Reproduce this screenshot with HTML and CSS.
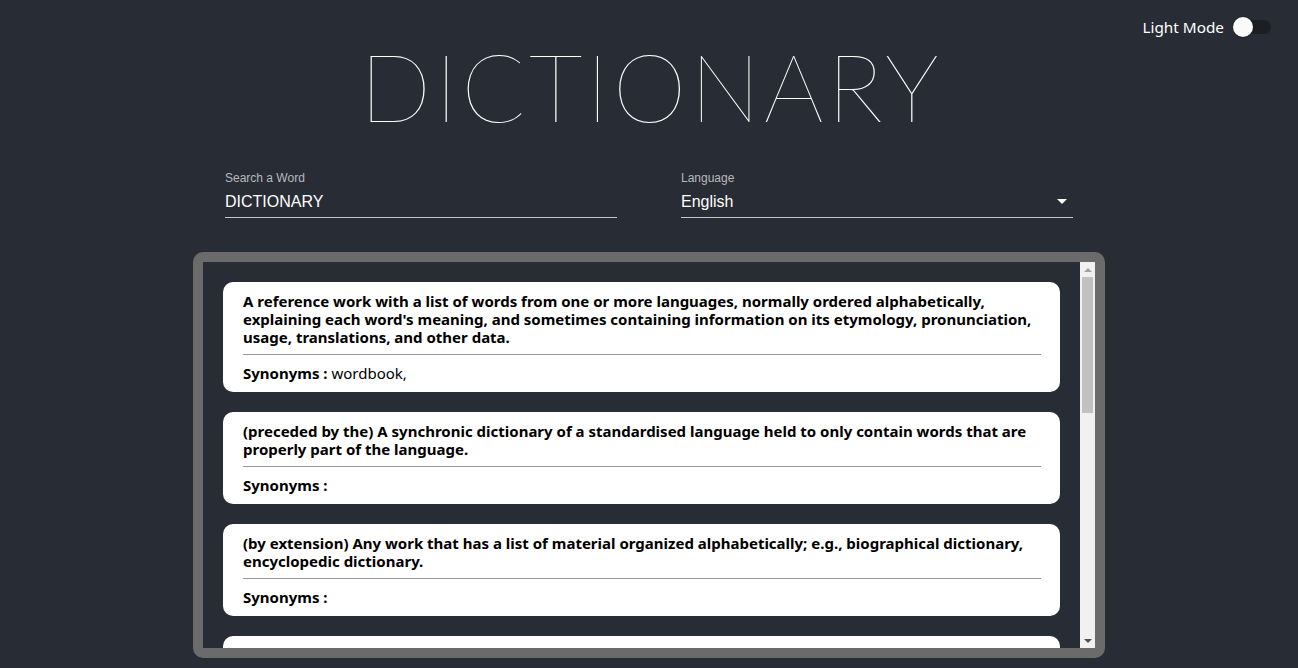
FILE: index.html
```html
<!DOCTYPE html>
<html lang="en">
<head>
<meta charset="utf-8">
<title>Dictionary</title>
<link rel="stylesheet" href="styles.css">
</head>
<body>
<div class="app">
  <div class="topbar">
    <span class="mode-label">Light Mode</span>
    <span class="switch"><span class="track"></span><span class="thumb"></span></span>
  </div>
  <h1 class="title">DICTIONARY</h1>
  <div class="fields">
    <div class="field">
      <label class="field-label">Search a Word</label>
      <div class="field-input">DICTIONARY</div>
    </div>
    <div class="field">
      <label class="field-label">Language</label>
      <div class="field-input select">English
        <svg class="caret" width="10" height="5" viewBox="0 0 10 5"><path d="M0 0 L10 0 L5 5 Z" fill="#fff"/></svg>
      </div>
    </div>
  </div>
  <div class="meanings-box">
    <div class="meanings">
      <div class="card">
        <div class="def">A reference work with a list of words from one or more languages, normally ordered alphabetically, explaining each word's meaning, and sometimes containing information on its etymology, pronunciation, usage, translations, and other data.</div>
        <hr class="sep">
        <div class="syn"><b>Synonyms :</b> wordbook,</div>
      </div>
      <div class="card">
        <div class="def">(preceded by the) A synchronic dictionary of a standardised language held to only contain words that are properly part of the language.</div>
        <hr class="sep">
        <div class="syn"><b>Synonyms :</b></div>
      </div>
      <div class="card">
        <div class="def">(by extension) Any work that has a list of material organized alphabetically; e.g., biographical dictionary, encyclopedic dictionary.</div>
        <hr class="sep">
        <div class="syn"><b>Synonyms :</b></div>
      </div>
      <div class="card">
        <div class="def">An associative array, a data structure where each value is referenced by a particular key, analogous to words and definitions in a physical dictionary.</div>
        <hr class="sep">
        <div class="syn"><b>Synonyms :</b></div>
      </div>
    </div>
    <div class="scrollbar" aria-hidden="true">
      <div class="sb-btn">
        <svg width="8" height="4" viewBox="0 0 8 4"><path d="M0 4 L4 0 L8 4 Z" fill="#a3a3a3"/></svg>
      </div>
      <div class="sb-track"><div class="sb-thumb"></div></div>
      <div class="sb-btn">
        <svg width="8" height="4" viewBox="0 0 8 4"><path d="M0 0 L8 0 L4 4 Z" fill="#505050"/></svg>
      </div>
    </div>
  </div>
</div>
</body>
</html>
```
FILE: styles.css
```css
html, body {
  margin: 0;
  padding: 0;
  background: #282c34;
  height: 100%;
  overflow: hidden;
}
body {
  color: #fff;
  font-family: "Noto Sans", "DejaVu Sans", sans-serif;
}
.app {
  display: flex;
  flex-direction: column;
  align-items: center;
}
.topbar {
  align-self: stretch;
  display: flex;
  justify-content: flex-end;
  align-items: center;
  height: 20px;
  padding: 17px 27px 0 0;
  gap: 9px;
}
.mode-label {
  font-size: 15.3px;
  color: #fff;
}
.switch {
  position: relative;
  width: 38px;
  height: 20px;
  display: inline-block;
}
.track {
  position: absolute;
  left: 7px;
  top: 3px;
  width: 31px;
  height: 14px;
  border-radius: 7px;
  background: #1b1e23;
}
.thumb {
  position: absolute;
  left: 0;
  top: 0;
  width: 20px;
  height: 20px;
  border-radius: 50%;
  background: #fafafa;
  box-shadow: 0 1px 2px rgba(0,0,0,0.3);
}
.title {
  margin: -6px 0 0 0;
  font-family: "Lato", sans-serif;
  font-weight: 100;
  font-size: 94px;
  line-height: 110px;
  letter-spacing: 3.6px;
  padding-left: 4px;
  color: #fff;
}
.fields {
  display: flex;
  gap: 64px;
  margin-top: 30px;
}
.field {
  width: 392px;
  display: flex;
  flex-direction: column;
  font-family: "Liberation Sans", Arial, sans-serif;
}
.field-label {
  font-size: 12px;
  line-height: 14px;
  color: #b7b9bd;
}
.field-input {
  margin-top: 7px;
  font-size: 16px;
  line-height: 19px;
  padding-bottom: 6px;
  border-bottom: 1px solid #c5c6c8;
  color: #fff;
  display: flex;
  align-items: center;
  justify-content: space-between;
}
.caret {
  margin-right: 6px;
}
.meanings-box {
  margin-top: 34px;
  width: 892px;
  height: 386px;
  border: 10px solid #6b6b6b;
  border-radius: 10px;
  background: #282c34;
  display: flex;
}
.meanings {
  flex: 1;
  min-width: 0;
  overflow: hidden;
  padding: 20px 20px 0 20px;
  display: flex;
  flex-direction: column;
  gap: 20px;
}
.scrollbar {
  width: 15px;
  flex-shrink: 0;
  background: #f1f1f1;
  display: flex;
  flex-direction: column;
}
.sb-btn {
  height: 15px;
  display: flex;
  align-items: center;
  justify-content: center;
  flex-shrink: 0;
}
.sb-track {
  flex: 1;
  padding: 0 2px;
}
.sb-thumb {
  height: 136px;
  background: #c1c1c1;
}
.card {
  background: #fff;
  color: #000;
  border-radius: 10px;
  padding: 10px 19px 10px 20px;
  font-family: "Noto Sans", sans-serif;
  font-size: 15px;
  line-height: 18px;
  flex-shrink: 0;
}
.def {
  font-weight: 700;
}
.sep {
  margin: 8px 0 9px 0;
  border: 0;
  border-top: 1px solid #9a9a9a;
  height: 0;
}
.syn {
  font-weight: 400;
}
.syn b {
  font-weight: 700;
}
```
